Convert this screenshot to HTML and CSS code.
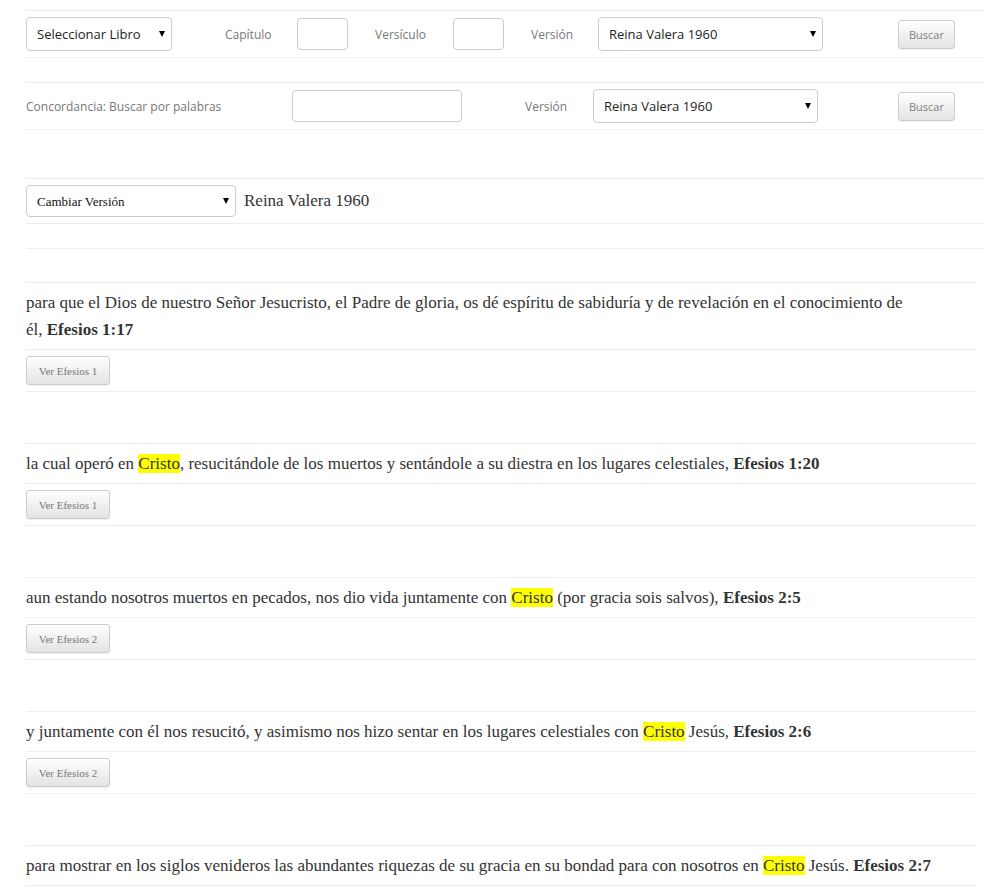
FILE: index.html
```html
<!DOCTYPE html>
<html lang="es">
<head>
<meta charset="utf-8">
<title>Concordancia</title>
<link rel="stylesheet" href="styles.css">
</head>
<body>
<div class="page">
  <form class="bar bar-search">
    <div class="sel-wrap sel-libro"><select class="sel"><option>Seleccionar Libro</option></select></div>
    <label class="cell cell-cap">Capítulo</label>
    <input class="num" type="text">
    <label class="cell cell-ver">Versículo</label>
    <input class="num" type="text">
    <label class="cell cell-vsn">Versión</label>
    <div class="sel-wrap sel-version"><select class="sel"><option>Reina Valera 1960</option></select></div>
    <button class="btn btn-buscar" type="button">Buscar</button>
  </form>

  <form class="bar bar-conc">
    <label class="cell cell-conc">Concordancia: Buscar por palabras</label>
    <input class="words" type="text">
    <label class="cell cell-vsn2">Versión</label>
    <div class="sel-wrap sel-version"><select class="sel"><option>Reina Valera 1960</option></select></div>
    <button class="btn btn-buscar btn-buscar2" type="button">Buscar</button>
  </form>

  <div class="bar bar-change">
    <div class="sel-wrap sel-cambiar"><select class="sel sel-serif"><option>Cambiar Versión</option></select></div>
    <span class="current">Reina Valera 1960</span>
  </div>

  <div class="rule rule-full"></div>

  <div class="verses">
    <div class="verse">
      <p class="verse-text">para que el Dios de nuestro Señor Jesucristo, el Padre de gloria, os dé espíritu de sabiduría y de revelación en el conocimiento de él,&nbsp;<b>Efesios 1:17</b></p>
      <div class="verse-actions"><button class="btn btn-ver" type="button">Ver Efesios 1</button></div>
    </div>
    <div class="verse">
      <p class="verse-text">la cual operó en <mark class="hl">Cristo</mark>, resucitándole de los muertos y sentándole a su diestra en los lugares celestiales,&nbsp;<b>Efesios 1:20</b></p>
      <div class="verse-actions"><button class="btn btn-ver" type="button">Ver Efesios 1</button></div>
    </div>
    <div class="verse">
      <p class="verse-text">aun estando nosotros muertos en pecados, nos dio vida juntamente con <mark class="hl">Cristo</mark> (por gracia sois salvos),&nbsp;<b>Efesios 2:5</b></p>
      <div class="verse-actions"><button class="btn btn-ver" type="button">Ver Efesios 2</button></div>
    </div>
    <div class="verse">
      <p class="verse-text">y juntamente con él nos resucitó, y asimismo nos hizo sentar en los lugares celestiales con <mark class="hl">Cristo</mark> Jesús,&nbsp;<b>Efesios 2:6</b></p>
      <div class="verse-actions"><button class="btn btn-ver" type="button">Ver Efesios 2</button></div>
    </div>
    <div class="verse">
      <p class="verse-text">para mostrar en los siglos venideros las abundantes riquezas de su gracia en su bondad para con nosotros en <mark class="hl">Cristo</mark> Jesús.&nbsp;<b>Efesios 2:7</b></p>
      <div class="verse-actions"><button class="btn btn-ver" type="button">Ver Efesios 2</button></div>
    </div>
  </div>
</div>
</body>
</html>
```
FILE: styles.css
```css
html, body {
  margin: 0;
  padding: 0;
  background: #fff;
}
body {
  font-family: "Liberation Serif", "Times New Roman", serif;
  color: #333;
}
.page {
  padding: 10px 0 40px 26px;
}

/* bars */
.bar {
  display: flex;
  align-items: center;
  border-top: 1px solid #eee;
  border-bottom: 1px solid #eee;
  height: 46px;
  box-sizing: content-box;
}
.bar-search { margin-bottom: 24px; }
.bar-conc { margin-bottom: 48px; }
.bar-change { height: 44px; margin-bottom: 24px; }

.rule {
  border-top: 1px solid #eee;
}
.rule-full { margin-bottom: 33px; }

.cell {
  font-family: "Open Sans", sans-serif;
  font-size: 12px;
  color: #777;
  box-sizing: border-box;
  white-space: nowrap;
  flex: none;
}
.cell-cap { width: 125px; padding-left: 53px; }
.cell-ver { width: 105px; padding-left: 27px; }
.cell-vsn { width: 94px; padding-left: 27px; }
.cell-conc { width: 266px; }
.cell-vsn2 { width: 131px; padding-left: 63px; }

/* selects */
.sel-wrap {
  position: relative;
  flex: none;
}
.sel-wrap::after {
  content: "";
  position: absolute;
  right: 7px;
  top: 50%;
  margin-top: -3px;
  border-left: 3px solid transparent;
  border-right: 3px solid transparent;
  border-top: 6px solid #000;
  pointer-events: none;
}
.sel {
  -webkit-appearance: none;
  appearance: none;
  display: block;
  width: 100%;
  height: 34px;
  margin: 0;
  padding: 0 20px 0 10px;
  border: 1px solid #ccc;
  border-radius: 4px;
  background: #fff;
  font-family: "Open Sans", sans-serif;
  font-size: 13px;
  color: #222;
  box-sizing: border-box;
}
.sel-libro { width: 146px; }
.sel-version { width: 225px; }
.sel-cambiar { width: 210px; }
.sel-cambiar .sel { height: 32px; }
.sel-serif {
  font-family: "Liberation Serif", "Times New Roman", serif;
  font-size: 13px;
  color: #111;
}

/* inputs */
.num, .words {
  height: 32px;
  margin: 0;
  border: 1px solid #ccc;
  border-radius: 4px;
  box-sizing: border-box;
  background: #fff;
  flex: none;
  padding: 0 6px;
}
.num { width: 51px; }
.words { width: 170px; }

/* buttons */
.btn {
  margin: 0;
  height: 29px;
  border: 1px solid #ccc;
  border-radius: 3px;
  background: linear-gradient(#ffffff, #e3e3e3);
  box-shadow: 0 1px 1px rgba(0, 0, 0, 0.06);
  color: #808080;
  cursor: pointer;
  box-sizing: border-box;
  flex: none;
  padding: 0;
}
.btn-buscar {
  width: 57px;
  margin-left: 75px;
  font-family: "Open Sans", sans-serif;
  font-size: 11px;
}
.btn-buscar2 { margin-left: 80px; }
.btn-ver {
  width: 84px;
  font-family: "Liberation Serif", "Times New Roman", serif;
  font-size: 11px;
  color: #777;
}

.current {
  margin-left: 8px;
  font-size: 17px;
  color: #333;
}

/* verses */
.verses {
  margin-right: 8px;
}
.verse {
  border-top: 1px solid #eee;
  margin-bottom: 51px;
}
.verse-text {
  margin: 0;
  padding: 6px 0;
  font-size: 17px;
  line-height: 27px;
  color: #333;
}
.verse-text b {
  font-weight: bold;
}
.verse-actions {
  border-top: 1px solid #eee;
  border-bottom: 1px solid #eee;
  padding: 6px 0;
  display: flex;
}
.hl {
  background: #ffff00;
  color: #333;
  padding: 0;
}
```
